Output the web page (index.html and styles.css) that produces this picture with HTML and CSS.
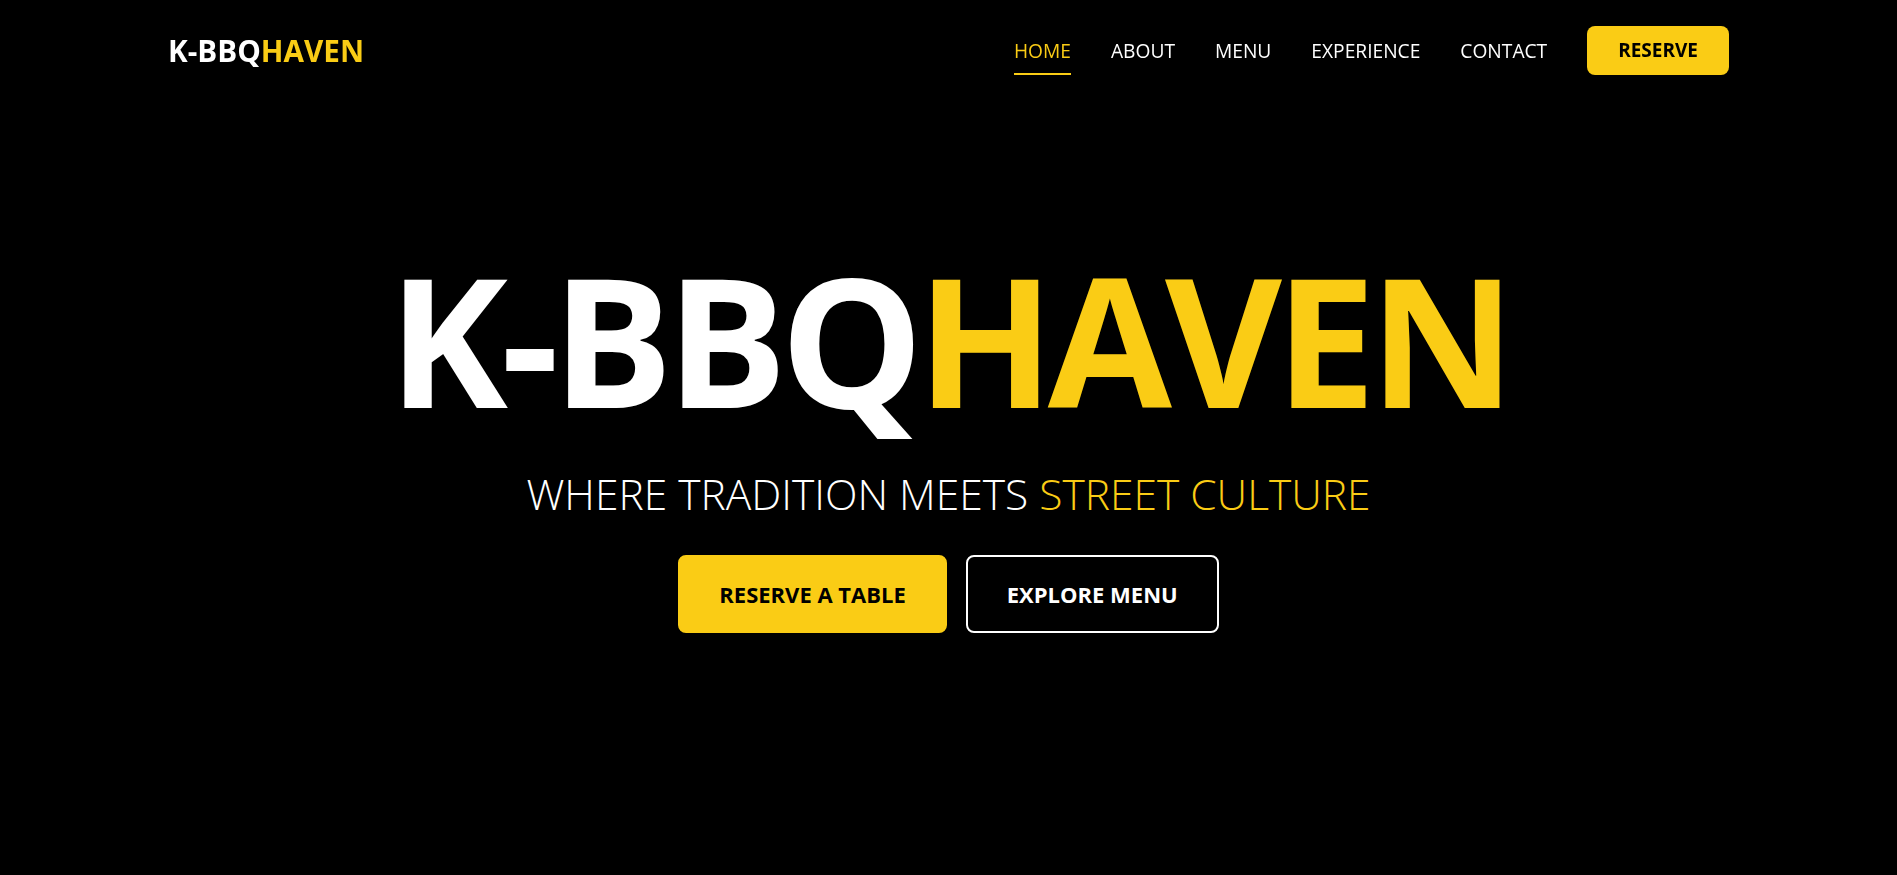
FILE: index.html
```html
<!DOCTYPE html>
<html lang="en">
<head>
<meta charset="utf-8">
<title>K-BBQ Haven</title>
<link rel="stylesheet" href="styles.css">
</head>
<body>
<header class="site-header">
  <div class="header-inner">
    <a class="logo" href="#">K-BBQ<span class="accent">HAVEN</span></a>
    <nav class="main-nav">
      <a class="nav-link active" href="#">HOME</a>
      <a class="nav-link" href="#">ABOUT</a>
      <a class="nav-link" href="#">MENU</a>
      <a class="nav-link" href="#">EXPERIENCE</a>
      <a class="nav-link" href="#">CONTACT</a>
      <a class="nav-btn" href="#">RESERVE</a>
    </nav>
  </div>
</header>
<main class="hero">
  <h1 class="hero-title">K-BBQ<span class="accent">HAVEN</span></h1>
  <p class="hero-sub">WHERE TRADITION MEETS <span class="accent">STREET CULTURE</span></p>
  <div class="hero-actions">
    <a class="btn btn-primary" href="#">RESERVE A TABLE</a>
    <a class="btn btn-outline" href="#">EXPLORE MENU</a>
  </div>
</main>
</body>
</html>
```
FILE: styles.css
```css
* { box-sizing: border-box; }
html, body { margin: 0; padding: 0; }
body {
  background: #000;
  color: #fff;
  font-family: "Open Sans", "Noto Sans", sans-serif;
  overflow: hidden;
}
a { text-decoration: none; color: inherit; }
.accent { color: #facc15; }

.site-header {
  position: fixed;
  top: 0; left: 0; right: 0;
  z-index: 10;
}
.header-inner {
  max-width: 1561px;
  margin: 0 auto;
  height: 100px;
  display: flex;
  align-items: center;
  justify-content: space-between;
}
.logo {
  font-weight: 700;
  font-size: 29.7px;
  line-height: 1.2;
  color: #fff;
  margin-top: 2px;
}
.main-nav {
  display: flex;
  align-items: center;
  gap: 40px;
}
.nav-link {
  position: relative;
  font-size: 19.2px;
  line-height: 1.5;
  color: #fff;
  margin-top: 2px;
}
.nav-link.active { color: #facc15; }
.nav-link.active::after {
  content: "";
  position: absolute;
  left: 0; right: 0;
  bottom: -10px;
  height: 2px;
  background: #facc15;
}
.nav-btn {
  background: #facc15;
  color: #000;
  font-weight: 700;
  font-size: 19px;
  line-height: 29px;
  padding: 10px 31px;
  border-radius: 8px;
}

.hero {
  height: 100vh;
  padding-top: 7px;
  display: flex;
  flex-direction: column;
  align-items: center;
  justify-content: center;
  text-align: center;
}
.hero-title {
  margin: 0;
  font-size: 180px;
  line-height: 1;
  font-weight: 700;
  letter-spacing: -6.8px;
  color: #fff;
}
.hero-sub {
  margin: 39px 0 0;
  font-size: 42.5px;
  line-height: 51px;
  font-weight: 300;
  color: #fff;
}
.hero-actions {
  margin-top: 36px;
  display: flex;
  gap: 19px;
}
.btn {
  display: inline-block;
  font-weight: 700;
  font-size: 22px;
  line-height: 32px;
  padding: 21px 39px;
  border: 2px solid #facc15;
  border-radius: 8px;
}
.btn-primary { background: #facc15; color: #000; }
.btn-outline { border-color: #fff; color: #fff; background: transparent; }
```
